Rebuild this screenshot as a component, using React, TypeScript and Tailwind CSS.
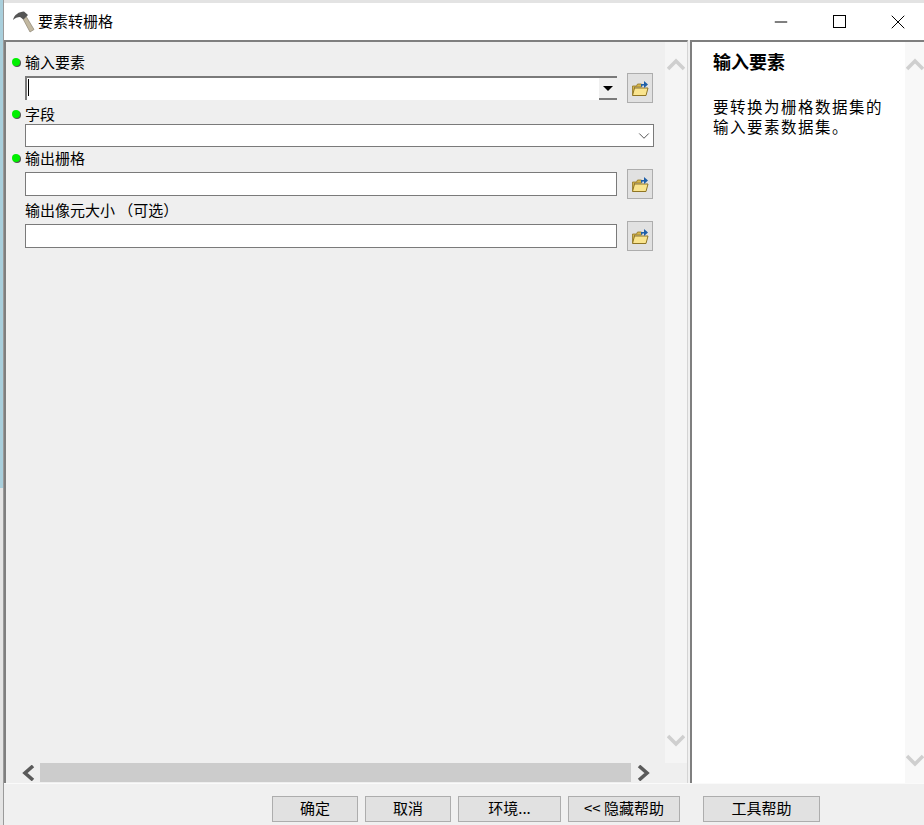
import { ChevronDown, Minus, X } from "lucide-react";

const FONT = "font-['Noto_Sans_CJK_SC','Liberation_Sans',sans-serif]";

const Dot = ({ on }: { on?: boolean }) => (
  <span className={`h-2 w-2 shrink-0 rounded-full ${on ? "bg-[#00f000] shadow-[1px_1px_0_#555]" : ""}`} />
);

const Label = ({ text, on, className }: { text: string; on?: boolean; className: string }) => (
  <div className={`flex items-center gap-[5px] pl-[6px] text-[15px] leading-[18px] text-black [text-spacing-trim:space-all] ${className}`}>
    <Dot on={on} />
    <span>{text}</span>
  </div>
);

const FolderButton = () => (
  <button className="flex h-[30px] w-[26px] shrink-0 items-center justify-center border border-[#adadad] bg-[#e1e1e1]">
    <svg width="18" height="17" viewBox="0 0 18 17">
      <path d="M1.5 6h4l1-2h4v3H3.5v8h-2z" fill="#d9b94f" stroke="#8f7524" strokeWidth="0.8" />
      <path d="M3.5 8H17l-2 7.5H1.5z" fill="#f9e48e" stroke="#8f7524" strokeWidth="1" />
      <path d="M10 6.5V4h3V1l4 3.5L13 8V5.5h-1.6v1z" fill="#1f5fa8" />
    </svg>
  </button>
);

const TextRow = ({ className }: { className: string }) => (
  <div className={`flex items-center gap-[10px] pl-[19px] ${className}`}>
    <div className="h-6 w-[592px] border border-[#7a7a7a] bg-white" />
    <FolderButton />
  </div>
);

// the thick arrows of the scroll bars
const Arrow = ({ dir, color }: { dir: "up" | "down" | "left" | "right"; color: string }) => {
  const points = {
    up: "1,12 9,4 17,12",
    down: "1,2 9,10 17,2",
    left: "12,1 4,8 12,15",
    right: "2,1 10,8 2,15",
  }[dir];
  const vertical = dir === "up" || dir === "down";
  return (
    <svg width={vertical ? 18 : 14} height={vertical ? 14 : 16} viewBox={vertical ? "0 0 18 14" : "0 0 14 16"} className="shrink-0">
      <polyline points={points} fill="none" stroke={color} strokeWidth="3.6" />
    </svg>
  );
};

const ScrollV = ({ width, bg }: { width: string; bg: string }) => (
  <div className={`flex shrink-0 flex-col items-center justify-between pt-[15px] pb-[15px] ${width} ${bg}`}>
    <Arrow dir="up" color="#cfcfcf" />
    <Arrow dir="down" color="#cfcfcf" />
  </div>
);

export default function App() {
  return (
    <div className={`flex h-[825px] w-[924px] overflow-hidden bg-[#f0f0f0] ${FONT}`}>
      <div className="flex w-[3px] shrink-0 flex-col">
        <div className="h-[488px] bg-[#a9cfdc]" />
        <div className="flex-1 bg-[#e4e4e4]" />
      </div>
      <div className="flex min-w-0 flex-1 flex-col border-l border-[#9a9a9a]">
        <div className="h-[3px] bg-[#e3e3e3]" />
        <div className="flex h-[37px] shrink-0 items-center bg-white pl-[7px]">
          <svg width="24" height="24" viewBox="0 0 24 24">
            <path d="M11 7l3-2.5 9 15-4 2.5z" fill="#c2b8a0" stroke="#8d8472" strokeWidth="0.7" />
            <path d="M2 10C3 5 8 1.5 13 1.5l4 3.5-4.5 4.5L9 7C6.500 7 4 8 2 10z" fill="#555555" />
          </svg>
          <span className="ml-[3px] text-[15px] text-black">要素转栅格</span>
          <div className="ml-auto flex items-center">
            <Minus size={20} strokeWidth={1.2} className="mr-[42px] text-black" />
            <div className="mr-[40px] h-[13px] w-[13px] border border-black" />
            <X size={24} strokeWidth={1} className="mr-[14px] text-black" />
          </div>
        </div>
        <div className="flex h-[743px] shrink-0">
          <div className="flex w-[684px] shrink-0 flex-col border-t-2 border-r border-l-2 border-t-[#7f7f7f] border-r-[#d4d4d4] border-l-[#7f7f7f] bg-[#efefef]">
            <div className="flex min-h-0 flex-1">
              <div className="min-w-0 flex-1">
                <Label text="输入要素" on className="mt-[11px]" />
                <div className="mt-[2px] flex items-center gap-[10px] pl-[19px]">
                  <div className="flex h-[24px] w-[592px] border-t-2 border-l-2 border-[#7a7a7a] bg-white">
                    <div className="mt-[1px] ml-[1px] h-[17px] w-px bg-black" />
                    <div className="ml-auto flex h-[22px] w-[18px] flex-col items-center justify-center border-b-2 border-[#7a7a7a] bg-[#f0f0f0]">
                      <div className="h-0 w-0 border-x-[5px] border-t-[5px] border-x-transparent border-t-black" />
                    </div>
                  </div>
                  <FolderButton />
                </div>
                <Label text="字段" on className="mt-[2px]" />
                <div className="mt-px ml-[19px] flex h-[23px] w-[629px] items-center justify-end border border-[#7a7a7a] bg-white">
                  <ChevronDown size={18} strokeWidth={1.2} className="text-[#444444]" />
                </div>
                <Label text="输出栅格" on className="mt-[2px]" />
                <TextRow className="mt-[2px]" />
                <Label text="输出像元大小 （可选）" className="mt-[2px]" />
                <TextRow className="mt-[2px]" />
              </div>
              <ScrollV width="w-[22px]" bg="bg-[#f5f5f5]" />
            </div>
            <div className="flex h-[20px] shrink-0 items-center gap-[5px] pb-px pl-[15px]">
              <Arrow dir="left" color="#5a5a5a" />
              <div className="h-[19px] w-[591px] bg-[#cccccc]" />
              <div className="ml-px">
                <Arrow dir="right" color="#5a5a5a" />
              </div>
            </div>
          </div>
          <div className="ml-[2px] flex min-w-0 flex-1 border-t-2 border-l-2 border-[#7f7f7f] bg-white">
            <div className="min-w-0 flex-1 pt-[4px] pl-[21px] text-black">
              <h2 className="text-[18px] leading-[30px] font-bold">输入要素</h2>
              <p className="mt-[20px] text-[15.5px] leading-[20px] tracking-[1.5px]">
                要转换为栅格数据集的
                <br />
                输入要素数据集。
              </p>
            </div>
            <ScrollV width="w-[19px]" bg="bg-[#f8f8f8]" />
          </div>
        </div>
        <div className="flex flex-1 items-start gap-[7px] border-t border-[#fafafa] pt-[12px] pl-[268px] text-[15px] text-black">
          <button className="h-[26px] w-[86px] border border-[#adadad] bg-[#e1e1e1] pb-[3px]">确定</button>
          <button className="h-[26px] w-[86px] border border-[#adadad] bg-[#e1e1e1] pb-[3px]">取消</button>
          <button className="h-[26px] w-[103px] border border-[#adadad] bg-[#e1e1e1] pb-[3px]">环境...</button>
          <button className="h-[26px] w-[112px] border border-[#adadad] bg-[#e1e1e1] pb-[3px]">&lt;&lt; 隐藏帮助</button>
          <button className="ml-[16px] h-[26px] w-[117px] border border-[#adadad] bg-[#e1e1e1] pb-[3px]">工具帮助</button>
        </div>
      </div>
    </div>
  );
}
